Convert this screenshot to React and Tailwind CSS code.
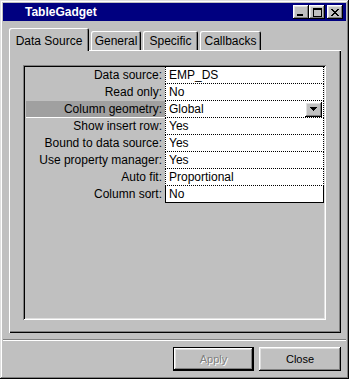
import React from 'react';

const raised = 'shadow-[inset_-1px_-1px_#000,inset_1px_1px_#fff,inset_-2px_-2px_#808080,inset_2px_2px_#dfdfdf]';

const rows = [
  { label: 'Data source:', value: 'EMP_DS' },
  { label: 'Read only:', value: 'No' },
  { label: 'Column geometry:', value: 'Global', active: true },
  { label: 'Show insert row:', value: 'Yes' },
  { label: 'Bound to data source:', value: 'Yes' },
  { label: 'Use property manager:', value: 'Yes' },
  { label: 'Auto fit:', value: 'Proportional' },
  { label: 'Column sort:', value: 'No' },
];

const tabs = [
  { label: 'General', w: 'w-[50px]' },
  { label: 'Specific', w: 'w-[55px]' },
  { label: 'Callbacks', w: 'w-[61px]' },
];

function TitleButton({ children }) {
  return (
    <div className={`w-[16px] h-[14px] bg-[#c0c0c0] ${raised} flex items-center justify-center`}>
      {children}
    </div>
  );
}

export default function App() {
  return (
    <div className="w-[349px] h-[379px] bg-[#c0c0c0] p-[3px] flex flex-col font-['Liberation_Sans',Arial,sans-serif] text-black shadow-[inset_-1px_-1px_#000,inset_1px_1px_#dfdfdf,inset_-2px_-2px_#808080,inset_2px_2px_#fff]">
      {/* title bar */}
      <div className="h-[18px] bg-[#000080] flex items-center pl-[22px] pr-[3px]">
        <span className="text-white font-bold text-[12px] leading-none flex-1">TableGadget</span>
        <TitleButton>
          <div className="w-[6px] h-[2px] bg-black mt-[6px] mr-[3px]" />
        </TitleButton>
        <TitleButton>
          <div className="w-[9px] h-[9px] border border-black border-t-2" />
        </TitleButton>
        <div className="ml-[2px]">
          <TitleButton>
            <svg width="8" height="7" viewBox="0 0 8 7" shapeRendering="crispEdges">
              <path d="M0 0h2v1H0zM6 0h2v1H6zM1 1h2v1H1zM5 1h2v1H5zM2 2h4v1H2zM3 3h2v1H3zM2 4h4v1H2zM1 5h2v1H1zM5 5h2v1H5zM0 6h2v1H0zM6 6h2v1H6z" fill="#000" />
            </svg>
          </TitleButton>
        </div>
      </div>

      {/* tabs */}
      <div className="mt-[7px] ml-[6px] mr-[5px] flex flex-col">
        <div className="h-[22px] flex items-end">
          <div className="relative z-10 w-[80px] h-[23px] -mb-[1px] bg-[#c0c0c0] rounded-t-[2px] shadow-[inset_1px_1px_#fff,inset_-1px_0_#000,inset_-2px_0_#808080] pt-[6px] text-center leading-[14px] text-[12px]">
            Data Source
          </div>
          {tabs.map((t) => (
            <div
              key={t.label}
              className={`${t.w} ml-[2px] h-[19px] bg-[#c0c0c0] rounded-t-[2px] shadow-[inset_1px_1px_#fff,inset_-1px_0_#000,inset_-2px_0_#808080] pt-[3px] text-center leading-[14px] text-[12px]`}
            >
              {t.label}
            </div>
          ))}
        </div>

        {/* tab panel */}
        <div className="h-[283px] bg-[#c0c0c0] shadow-[inset_1px_1px_#fff,inset_-1px_-1px_#000,inset_-2px_-2px_#808080] pt-[15px] pl-[14px]">
          <div className="w-[303px] h-[255px] p-[2px] shadow-[inset_1px_1px_#808080,inset_-1px_-1px_#fff,inset_2px_2px_#000,inset_-2px_-2px_#dfdfdf]">
            <div className="flex flex-col text-[12px]">
              {rows.map((r, i) => (
                <div key={r.label} className="flex h-[17px]">
                  <div className="w-[140px] pl-[1px]">
                    <div
                      className={`h-[17px] pr-[3px] text-right leading-[16px] ${
                        r.active ? 'bg-[#a0a0a0] border-b border-white' : ''
                      }`}
                    >
                      {r.label}
                    </div>
                  </div>
                  <div
                    className={`flex-1 bg-white border-l border-r border-black flex items-center pl-[3px] ${
                      i === rows.length - 1 ? 'border-b border-b-black' : 'border-b border-dotted border-b-black'
                    }`}
                  >
                    <span className="flex-1 leading-[16px]">{r.value}</span>
                    {r.active && (
                      <div className={`w-[17px] h-[15px] mr-[1px] bg-[#c0c0c0] ${raised} flex items-center justify-center`}>
                        <svg width="7" height="4" viewBox="0 0 7 4" shapeRendering="crispEdges">
                          <path d="M0 0h7v1H0zM1 1h5v1H1zM2 2h3v1H2zM3 3h1v1H3z" fill="#000" />
                        </svg>
                      </div>
                    )}
                  </div>
                </div>
              ))}
            </div>
          </div>
        </div>
      </div>

      {/* separator */}
      <div className="mt-[6px] border-t border-[#808080] border-b border-b-white" />

      {/* buttons */}
      <div className="mt-[6px] h-[24px] flex justify-end gap-[5px] mr-[5px] text-[11px]">
        <div className="w-[81px] h-[24px] border border-black">
          <div className={`w-full h-full bg-[#c0c0c0] ${raised} flex items-center justify-center text-[#808080] [text-shadow:1px_1px_0_#fff]`}>
            Apply
          </div>
        </div>
        <div className={`w-[82px] h-[24px] bg-[#c0c0c0] ${raised} flex items-center justify-center`}>
          Close
        </div>
      </div>
    </div>
  );
}
